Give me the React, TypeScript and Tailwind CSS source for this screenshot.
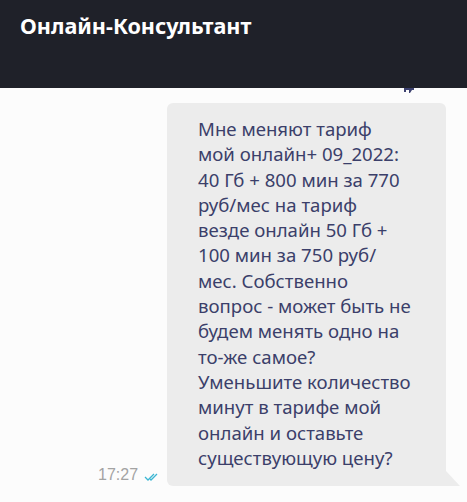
import React from "react";

const lines = [
  "Мне меняют тариф",
  "мой онлайн+ 09_2022:",
  "40 Гб + 800 мин за 770",
  "руб/мес на тариф",
  "везде онлайн 50 Гб +",
  "100 мин за 750 руб/",
  "мес. Собственно",
  "вопрос - может быть не",
  "будем менять одно на",
  "то-же самое?",
  "Уменьшите количество",
  "минут в тарифе мой",
  "онлайн и оставьте",
  "существующую цену?",
];

export default function App() {
  return (
    <div className="w-[467px] h-[502px] bg-[#fcfcfc] overflow-hidden relative">
      <div className="h-[88px] bg-[#1f2129] px-[20px] pt-[11px]">
        <h1
          className="text-white font-bold text-[21.6px] leading-[30px]"
          style={{ fontFamily: '"Noto Sans", "Open Sans", sans-serif' }}
        >
          Онлайн-Консультант
        </h1>
      </div>
      <div className="absolute left-[404px] top-[88px] w-[10px] h-[5px]">
        <svg width="10" height="5" viewBox="0 0 10 5">
          <path d="M0 0 H10 V2 H8 L6 5 H5 V2 H2 V4 H0 Z" fill="#3d4270" />
        </svg>
      </div>
      <div className="flex items-end pl-[98px] pt-[15px]">
        <div className="flex items-center gap-[6px] mb-[1px] mr-[8px]">
          <span
            className="text-[16px] leading-[20px] text-[#a3a3a3]"
            style={{ fontFamily: '"Liberation Sans", Arial, sans-serif' }}
          >
            17:27
          </span>
          <svg width="15" height="10" viewBox="0 0 15 10" className="mt-[3px]">
            <path d="M1 5 L4 8 L10 2" stroke="#3bb6d3" strokeWidth="1.3" fill="none" />
            <path d="M6 7 L7 8 L13 2" stroke="#3bb6d3" strokeWidth="1.3" fill="none" />
          </svg>
        </div>
        <div className="relative">
          <div className="w-[279px] bg-[#ececec] rounded-[6px] rounded-br-none pl-[31px] pr-[8px] pt-[13px] pb-[16px]">
            <div
              className="text-[18.6px] leading-[25.3px] text-[#3b3f6a]"
              style={{ fontFamily: '"Noto Sans", "Open Sans", sans-serif' }}
            >
              {lines.map((l, i) => (
                <div key={i} className="whitespace-nowrap">{l}</div>
              ))}
            </div>
          </div>
          <svg className="absolute right-[-14px] bottom-0" width="14" height="15" viewBox="0 0 14 15">
            <path d="M0 0 L14 15 L0 15 Z" fill="#ececec" />
          </svg>
        </div>
      </div>
    </div>
  );
}
